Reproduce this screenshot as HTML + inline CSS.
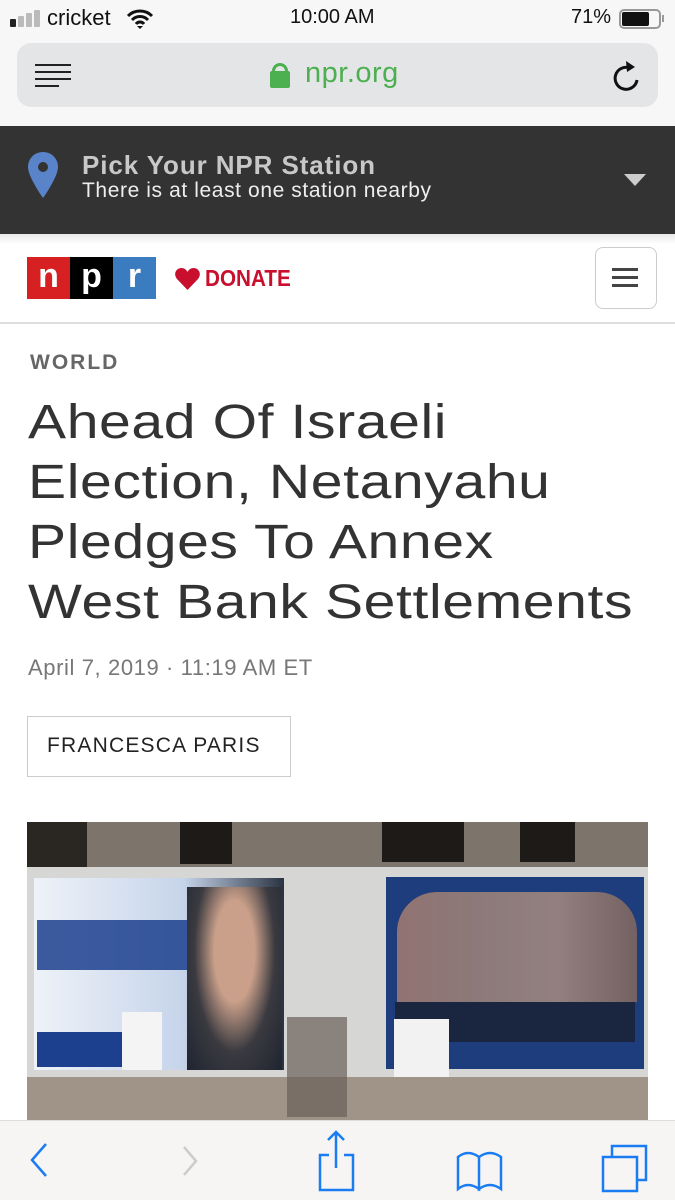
<!DOCTYPE html>
<html><head><meta charset="utf-8"><style>
*{margin:0;padding:0;box-sizing:border-box}
body{width:675px;height:1200px;overflow:hidden;background:#fff;font-family:"Liberation Sans",sans-serif;position:relative}
.a{position:absolute}
</style></head><body>
<div class="a" style="left:0;top:0;width:675px;height:126px;background:#f7f7f7"></div>
<!-- status -->
<div class="a" style="left:10px;top:19px;width:6px;height:8px;background:#222;border-radius:1px"></div>
<div class="a" style="left:18px;top:16px;width:6px;height:11px;background:#bbb;border-radius:1px"></div>
<div class="a" style="left:26px;top:13px;width:6px;height:14px;background:#bbb;border-radius:1px"></div>
<div class="a" style="left:34px;top:10px;width:6px;height:17px;background:#bbb;border-radius:1px"></div>
<div class="a" style="left:47px;top:5px;font-size:22px;color:#111">cricket</div>
<svg class="a" style="left:126px;top:8px" width="28" height="22" viewBox="0 0 28 22"><path d="M2 8a17 17 0 0 1 24 0M6 12a11 11 0 0 1 16 0M10 16a5 5 0 0 1 8 0" stroke="#111" stroke-width="3" fill="none"/><path d="M11 18l3 3 3-3z" fill="#111"/></svg>
<div class="a" style="left:290px;top:6px;font-size:20px;color:#111">10:00 AM</div>
<div class="a" style="left:571px;top:6px;font-size:20px;color:#111">71%</div>
<div class="a" style="left:619px;top:9px;width:42px;height:20px;border:2px solid #999;border-radius:5px"></div>
<div class="a" style="left:622px;top:12px;width:27px;height:14px;background:#111;border-radius:2px"></div>
<div class="a" style="left:662px;top:15px;width:2px;height:7px;background:#999"></div>
<!-- url bar -->
<div class="a" style="left:17px;top:43px;width:641px;height:64px;background:#e4e5e7;border-radius:14px"></div>
<div class="a" style="left:35px;top:64px;width:36px;height:2px;background:#222"></div>
<div class="a" style="left:35px;top:71px;width:36px;height:2px;background:#222"></div>
<div class="a" style="left:35px;top:78px;width:36px;height:2px;background:#222"></div>
<div class="a" style="left:35px;top:85px;width:24px;height:2px;background:#222"></div>
<div class="a" style="left:272px;top:63px;width:16px;height:14px;border:3px solid #4caf50;border-bottom:none;border-radius:8px 8px 0 0"></div>
<div class="a" style="left:270px;top:71px;width:20px;height:17px;background:#4caf50;border-radius:2px"></div>
<div class="a" style="left:305px;top:57px;font-size:29px;color:#4caf50;letter-spacing:.5px">npr.org</div>
<svg class="a" style="left:610px;top:58px" width="32" height="36" viewBox="0 0 32 36"><path d="M20 10A11 11 0 1 0 27 22" stroke="#111" stroke-width="3" fill="none"/><path d="M16 3l9 6-8 5z" fill="#111"/></svg>
<!-- station -->
<div class="a" style="left:0;top:126px;width:675px;height:108px;background:#333"></div>
<svg class="a" style="left:27px;top:152px" width="32" height="46" viewBox="0 0 32 46"><path d="M16 0C7 0 1 7 1 15c0 10 15 31 15 31s15-21 15-31C31 7 25 0 16 0z" fill="#5a84c9"/><circle cx="16" cy="15" r="5" fill="#333"/></svg>
<div class="a" style="left:82px;top:150px;font-size:26px;font-weight:bold;color:#c8c8c8;letter-spacing:.9px">Pick Your NPR Station</div>
<div class="a" style="left:82px;top:179px;font-size:21px;color:#eee;letter-spacing:.6px">There is at least one station nearby</div>
<div class="a" style="left:624px;top:174px;width:0;height:0;border-left:11px solid transparent;border-right:11px solid transparent;border-top:12px solid #ccc"></div>
<!-- header -->
<div class="a" style="left:0;top:234px;width:675px;height:10px;background:linear-gradient(#e8e8e8,#fff)"></div>
<div class="a" style="left:27px;top:257px;width:43px;height:42px;background:#d62021;color:#fff;font-size:34px;font-weight:bold;text-align:center;line-height:38px">n</div>
<div class="a" style="left:70px;top:257px;width:43px;height:42px;background:#000;color:#fff;font-size:34px;font-weight:bold;text-align:center;line-height:38px">p</div>
<div class="a" style="left:113px;top:257px;width:43px;height:42px;background:#3b7bbf;color:#fff;font-size:34px;font-weight:bold;text-align:center;line-height:38px">r</div>
<svg class="a" style="left:175px;top:268px" width="25" height="22" viewBox="0 0 25 22"><path d="M12.5 22L2 11C-2 6 1 0 6.5 0c3 0 5 2 6 4 1-2 3-4 6-4C24 0 27 6 23 11z" fill="#c8102e"/></svg>
<div class="a" style="left:205px;top:265px;font-size:23px;color:#c8102e;font-weight:bold;transform:scaleX(.9);transform-origin:left">DONATE</div>
<div class="a" style="left:595px;top:247px;width:62px;height:62px;border:1px solid #ccc;border-radius:8px"></div>
<div class="a" style="left:612px;top:268px;width:26px;height:3px;background:#444;box-shadow:0 8px 0 #444,0 16px 0 #444"></div>
<div class="a" style="left:0;top:322px;width:675px;height:2px;background:#ddd"></div>
<!-- article -->
<div class="a" style="left:30px;top:351px;font-size:21px;font-weight:bold;color:#666;letter-spacing:2px">WORLD</div>
<div class="a" style="left:28px;top:393px;font-size:48px;line-height:60px;color:#333;letter-spacing:.5px;transform:scaleX(1.19);transform-origin:left;white-space:nowrap">Ahead Of Israeli<br>Election, Netanyahu<br>Pledges To Annex<br>West Bank Settlements</div>
<div class="a" style="left:28px;top:655px;font-size:22px;color:#777;letter-spacing:.6px">April 7, 2019 · 11:19 AM ET</div>
<div class="a" style="left:27px;top:716px;width:264px;height:61px;border:1px solid #ccc"></div>
<div class="a" style="left:47px;top:734px;font-size:21px;color:#222;letter-spacing:1.2px">FRANCESCA PARIS</div>
<!-- photo -->
<div class="a" style="left:27px;top:822px;width:621px;height:298px;background:#ccc;overflow:hidden">
<div class="a" style="left:0;top:0;width:621px;height:48px;background:#7d746b"></div>
<div class="a" style="left:0;top:0;width:60px;height:45px;background:#2a2622"></div>
<div class="a" style="left:153px;top:0;width:52px;height:42px;background:#1e1a17"></div>
<div class="a" style="left:355px;top:0;width:82px;height:40px;background:#1e1a17"></div>
<div class="a" style="left:493px;top:0;width:55px;height:40px;background:#1e1a17"></div>
<div class="a" style="left:0;top:45px;width:621px;height:210px;background:#d6d6d4"></div>
<div class="a" style="left:7px;top:56px;width:250px;height:192px;background:linear-gradient(90deg,#eef2f8,#c6d4ea 60%,#2a3342)"></div>
<div class="a" style="left:160px;top:65px;width:95px;height:183px;background:radial-gradient(ellipse at 50% 35%,#caa08a 0 30%,#3a3a40 60%,#1f2430)"></div>
<div class="a" style="left:10px;top:210px;width:90px;height:35px;background:#1c3f8e"></div>
<div class="a" style="left:10px;top:98px;width:150px;height:50px;background:#1c3f8e;opacity:.85"></div>
<div class="a" style="left:95px;top:190px;width:40px;height:58px;background:#f4f4f4"></div>
<div class="a" style="left:359px;top:55px;width:258px;height:192px;background:#1d3d7d"></div>
<div class="a" style="left:370px;top:70px;width:240px;height:110px;background:linear-gradient(90deg,#b08070,#a88878,#b09080,#8a6a5a);opacity:.8;border-radius:40px 40px 0 0"></div>
<div class="a" style="left:368px;top:180px;width:240px;height:40px;background:#1a2540"></div>
<div class="a" style="left:367px;top:197px;width:55px;height:80px;background:#f2f2f2"></div>
<div class="a" style="left:0;top:255px;width:621px;height:43px;background:#a09488"></div>
<div class="a" style="left:260px;top:195px;width:60px;height:100px;background:#6a6058;opacity:.7"></div>
</div>
<!-- toolbar -->
<div class="a" style="left:0;top:1120px;width:675px;height:80px;background:#f7f5f3;border-top:1px solid #ddd"></div>
<svg class="a" style="left:0;top:1120px" width="675" height="80" viewBox="0 0 675 80"><g fill="none" stroke="#1a7cf2" stroke-width="2.5"><path d="M46 24L32 40l14 16"/><path d="M184 27l12 14-12 14" stroke="#ccc"/><path d="M329 35h-9v35h33V35h-9M336 48V12M328 20l8-8 8 8"/><path d="M458 37q10-8 21 0v32q-11-8-21 0zM479 37q11-8 22 0v32q-11-8-22 0z"/><path d="M603 37h34v34h-34zM612 37V26h34v34h-9"/></g></svg>
</body></html>
